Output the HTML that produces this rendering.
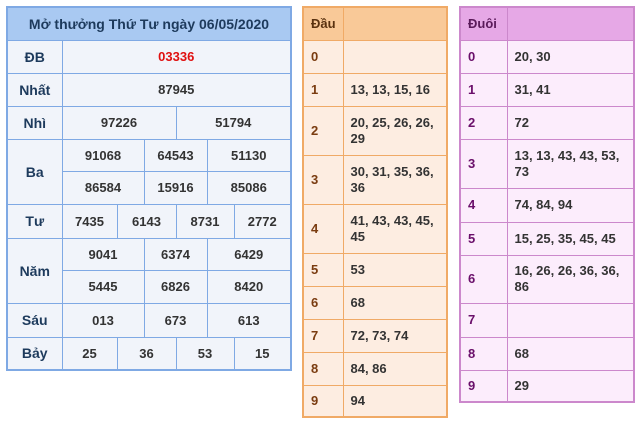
<!DOCTYPE html>
<html><head><meta charset="utf-8"><style>
body{margin:0;width:640px;height:424px;background:#fff;font-family:"Liberation Sans",Arial,sans-serif;font-weight:bold;font-size:13px;position:relative;overflow:hidden}
table{position:absolute;border-collapse:collapse;table-layout:fixed}
td{padding:0;text-align:center;vertical-align:middle}
#L{left:6px;top:6px;width:285px;border:2px solid #7fa9e4;background:#f1f4fa;color:#333}
#L td{border:1px solid #7fa9e4}
#L .h{background:#a9c9f2;color:#1d3a5c;font-size:14px}
#L .k{color:#1d3a5c;font-size:14px}
#M{left:302px;top:6px;width:146px;border:2px solid #f0aa66;background:#fdede1;color:#333}
#M td{border:1px solid #f0aa66;text-align:left;padding-left:7px;line-height:16px}
#M .h td{background:#f9c998;color:#5a3210}
#M td.k{color:#7a3c10}
#R{left:459px;top:6px;width:176px;border:2px solid #cc88cc;background:#fcedfc;color:#333}
#R td{border:1px solid #cc88cc;text-align:left;padding-left:7px;line-height:16px}
#R .h td{background:#e6a8e6;color:#5a1a5a}
#R td.k{color:#6a0f6a}
</style></head><body>
<table id="L">
<colgroup><col style="width:55px"><col style="width:55px"><col style="width:27px"><col style="width:32px"><col style="width:31px"><col style="width:27px"><col style="width:57px"></colgroup>
<tr style="height:33px"><td class="h" colspan="7">Mở thưởng Thứ Tư ngày 06/05/2020</td></tr>
<tr style="height:33px"><td class="k">ĐB</td><td colspan="6" style="color:#e01010">03336</td></tr>
<tr style="height:33px"><td class="k">Nhất</td><td colspan="6">87945</td></tr>
<tr style="height:33px"><td class="k">Nhì</td><td colspan="3">97226</td><td colspan="3">51794</td></tr>
<tr style="height:32px"><td class="k" rowspan="2">Ba</td><td colspan="2">91068</td><td colspan="2">64543</td><td colspan="2">51130</td></tr>
<tr style="height:33px"><td colspan="2">86584</td><td colspan="2">15916</td><td colspan="2">85086</td></tr>
<tr style="height:34px"><td class="k">Tư</td><td>7435</td><td colspan="2">6143</td><td colspan="2">8731</td><td>2772</td></tr>
<tr style="height:32px"><td class="k" rowspan="2">Năm</td><td colspan="2">9041</td><td colspan="2">6374</td><td colspan="2">6429</td></tr>
<tr style="height:33px"><td colspan="2">5445</td><td colspan="2">6826</td><td colspan="2">8420</td></tr>
<tr style="height:34px"><td class="k">Sáu</td><td colspan="2">013</td><td colspan="2">673</td><td colspan="2">613</td></tr>
<tr style="height:33px"><td class="k">Bảy</td><td>25</td><td colspan="2">36</td><td colspan="2">53</td><td>15</td></tr>
</table>
<table id="M">
<colgroup><col style="width:40px"><col></colgroup>
<tr class="h" style="height:33px"><td>Đầu</td><td></td></tr>
<tr style="height:33px"><td class="k">0</td><td></td></tr>
<tr style="height:33px"><td class="k">1</td><td>13, 13, 15, 16</td></tr>
<tr style="height:49px"><td class="k">2</td><td>20, 25, 26, 26, 29</td></tr>
<tr style="height:49px"><td class="k">3</td><td>30, 31, 35, 36, 36</td></tr>
<tr style="height:49px"><td class="k">4</td><td>41, 43, 43, 45, 45</td></tr>
<tr style="height:33px"><td class="k">5</td><td>53</td></tr>
<tr style="height:33px"><td class="k">6</td><td>68</td></tr>
<tr style="height:33px"><td class="k">7</td><td>72, 73, 74</td></tr>
<tr style="height:33px"><td class="k">8</td><td>84, 86</td></tr>
<tr style="height:32px"><td class="k">9</td><td>94</td></tr>
</table>
<table id="R">
<colgroup><col style="width:47px"><col></colgroup>
<tr class="h" style="height:33px"><td>Đuôi</td><td></td></tr>
<tr style="height:33px"><td class="k">0</td><td>20, 30</td></tr>
<tr style="height:33px"><td class="k">1</td><td>31, 41</td></tr>
<tr style="height:33px"><td class="k">2</td><td>72</td></tr>
<tr style="height:49px"><td class="k">3</td><td>13, 13, 43, 43, 53, 73</td></tr>
<tr style="height:34px"><td class="k">4</td><td>74, 84, 94</td></tr>
<tr style="height:33px"><td class="k">5</td><td>15, 25, 35, 45, 45</td></tr>
<tr style="height:48px"><td class="k">6</td><td>16, 26, 26, 36, 36, 86</td></tr>
<tr style="height:34px"><td class="k">7</td><td></td></tr>
<tr style="height:33px"><td class="k">8</td><td>68</td></tr>
<tr style="height:32px"><td class="k">9</td><td>29</td></tr>
</table>
</body></html>
